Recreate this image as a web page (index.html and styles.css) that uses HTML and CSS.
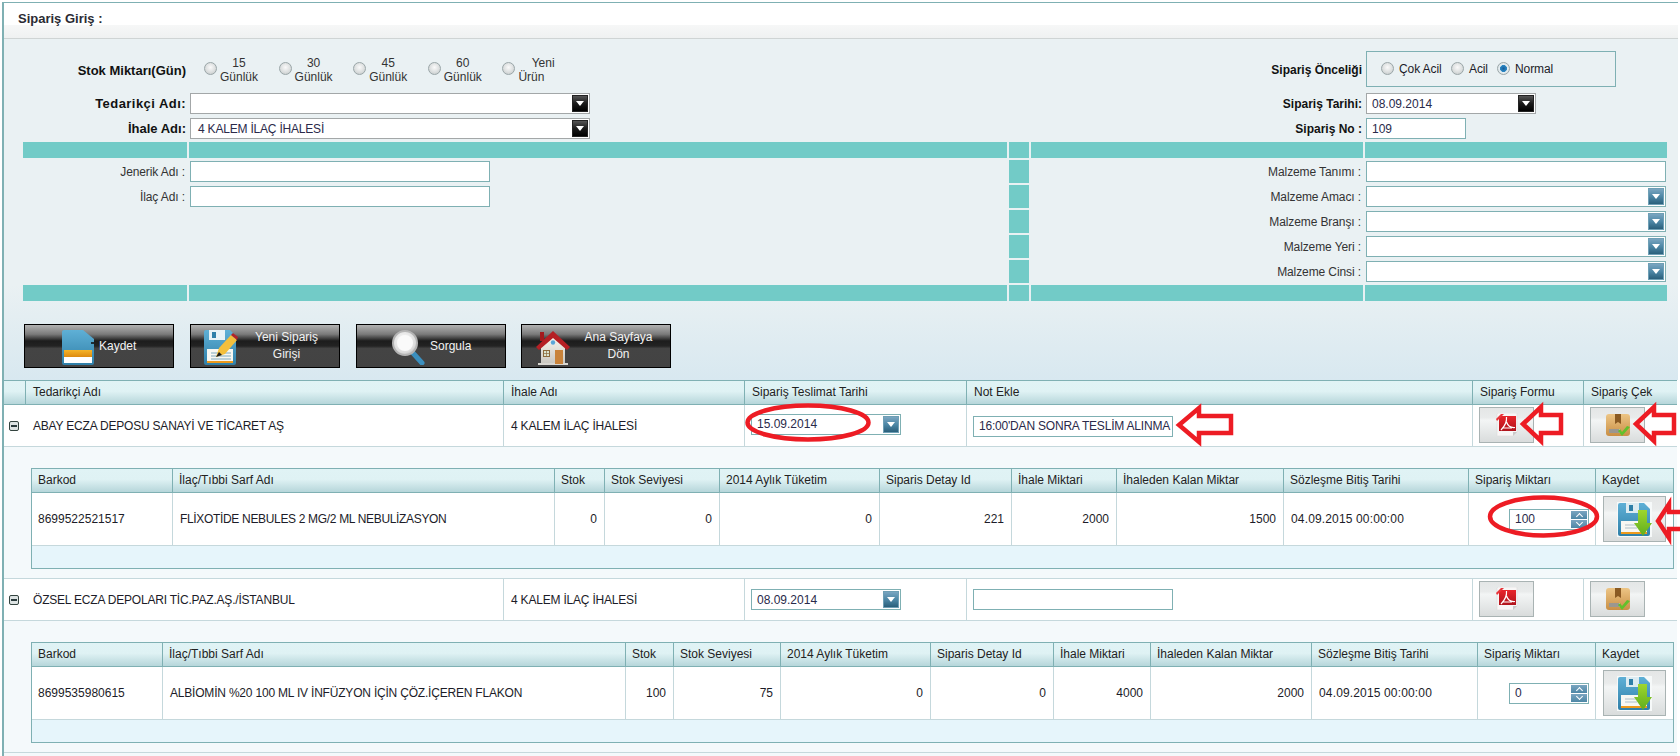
FILE: index.html
```html
<!DOCTYPE html>
<html lang="tr">
<head>
<meta charset="utf-8">
<title>Sipariş Giriş</title>
<link rel="stylesheet" href="styles.css">
</head>
<body>
<svg class="defs" width="0" height="0" aria-hidden="true">
  <defs>
    <linearGradient id="blue" x1="0" y1="0" x2="0" y2="1"><stop offset="0" stop-color="#5fb0d6"/><stop offset="1" stop-color="#2f7fa8"/></linearGradient>
    <linearGradient id="orange" x1="0" y1="0" x2="0" y2="1"><stop offset="0" stop-color="#f5b52a"/><stop offset="1" stop-color="#dd8a10"/></linearGradient>
    <linearGradient id="red" x1="0" y1="0" x2="0" y2="1"><stop offset="0" stop-color="#e8252b"/><stop offset="1" stop-color="#b0141c"/></linearGradient>
    <linearGradient id="tan" x1="0" y1="0" x2="0" y2="1"><stop offset="0" stop-color="#edc585"/><stop offset="1" stop-color="#c98f45"/></linearGradient>
    <linearGradient id="green" x1="0" y1="0" x2="0" y2="1"><stop offset="0" stop-color="#9ed62f"/><stop offset="1" stop-color="#5fae1c"/></linearGradient>
    <linearGradient id="wall" x1="0" y1="0" x2="0" y2="1"><stop offset="0" stop-color="#f8f6f0"/><stop offset="1" stop-color="#c9c7c0"/></linearGradient>
    <radialGradient id="glass" cx=".45" cy=".4" r=".7"><stop offset="0" stop-color="#ffffff"/><stop offset=".7" stop-color="#dcdcdc"/><stop offset="1" stop-color="#a8a8a8"/></radialGradient>
    <symbol id="i-card" viewBox="0 0 32 35">
      <path d="M2 0H21L32 9V33a2 2 0 0 1-2 2H2a2 2 0 0 1-2-2V2a2 2 0 0 1 2-2z" fill="url(#blue)"/>
      <rect x="2" y="20" width="28" height="7" fill="url(#orange)"/>
      <rect x="2" y="27" width="28" height="6" fill="#fff"/>
      <rect x="29" y="12" width="3" height="2" fill="#1c2c36"/>
    </symbol>
    <symbol id="i-new" viewBox="0 0 34 35">
      <path d="M2 0H26L32 6V33a2 2 0 0 1-2 2H2a2 2 0 0 1-2-2V2a2 2 0 0 1 2-2z" fill="url(#blue)"/>
      <rect x="5" y="0" width="16" height="10" fill="#e8f2f6"/>
      <rect x="8" y="2" width="4" height="6" fill="#2f7fa8"/>
      <rect x="3" y="19" width="26" height="14" fill="#f7f7f2"/>
      <rect x="3" y="31" width="26" height="2" fill="#ee9a1c"/>
      <path d="M7 23H27M7 26H27M7 29H27" stroke="#7fa9bd" stroke-width="1"/>
      <path d="M12 27L15 18 27 5 33 10 21 24z" fill="#f3bf3c"/>
      <path d="M27 5L29 3 34 7 33 10z" fill="#b22328"/>
      <path d="M12 27L15 22 18 25 12 27z" fill="#1c1c1c"/>
    </symbol>
    <symbol id="i-search" viewBox="0 0 33 35">
      <path d="M21 23L30 33" stroke="#3b8fbe" stroke-width="5" stroke-linecap="round"/>
      <circle cx="13" cy="13" r="12" fill="url(#glass)" stroke="#b4b4b4" stroke-width="2"/>
      <circle cx="13" cy="13" r="8" fill="#fafafa"/>
    </symbol>
    <symbol id="i-home" viewBox="0 0 34 35">
      <path d="M5 17L17 6 29 17V34H5z" fill="url(#wall)"/>
      <rect x="2" y="33" width="30" height="2" fill="#d8d6d0"/>
      <rect x="4" y="2" width="4" height="9" fill="#a3191d"/>
      <path d="M0 17L17 1 34 17 31 20 17 8 3 20z" fill="#b51f24"/>
      <circle cx="17" cy="12.500" r="2.200" fill="#5aa6d8"/>
      <rect x="7" y="20" width="7" height="7" fill="#8b6a3c"/>
      <path d="M8 21H13V26H8z" fill="#d9e4d0"/>
      <path d="M10.500 21V26M8 23.500H13" stroke="#8b6a3c" stroke-width=".7"/>
      <rect x="19" y="20" width="8" height="14" fill="#c9833a"/>
    </symbol>
    <symbol id="i-pdf" viewBox="0 0 22 24">
      <path d="M2 0H21V19L17 23H1V1z" fill="#f8f6f6" stroke="#dcdcdc" stroke-width=".6"/>
      <path d="M17 23V19H21z" fill="#c9c9c9"/>
      <rect x="3" y="3" width="17" height="15" fill="url(#red)"/>
      <path d="M0 6L5 1 8 1 1 8z" fill="#e8353a"/>
      <path d="M5 17C9 13 11 9 10.500 4M10.500 9C12 13 15 15 19 14.500M6 15H16" fill="none" stroke="#fff" stroke-width="1.200"/>
    </symbol>
    <symbol id="i-box" viewBox="0 0 24 23">
      <rect width="24" height="22" rx="3" fill="url(#tan)"/>
      <path d="M9 0H15V10L12 8 9 10z" fill="#8a5a22"/>
      <rect x="3" y="15" width="11" height="4" fill="#e9e2d4"/>
      <path d="M4 15V19M6 15V19M8 15V19M10 15V19M12 15V19" stroke="#4c4c4c" stroke-width="1"/>
      <path d="M12 17L16 22 24 13 21 12 16 18 14 15z" fill="#62c02c"/>
    </symbol>
    <symbol id="i-save" viewBox="0 0 35 35">
      <rect width="35" height="35" fill="#f6f9f9"/>
      <path d="M3 1H27L33 7V32a2 2 0 0 1-2 2H3a2 2 0 0 1-2-2V3a2 2 0 0 1 2-2z" fill="url(#blue)"/>
      <rect x="9" y="1" width="13" height="10" fill="#dcebf1"/>
      <rect x="12" y="3" width="4" height="6" fill="#2f7fa8"/>
      <rect x="4" y="19" width="26" height="13" fill="#f7f7f2"/>
      <rect x="4" y="30" width="26" height="2" fill="#ee9a1c"/>
      <path d="M8 23H20M8 26H20" stroke="#aebfc8" stroke-width="1"/>
      <path d="M21 8H30V21H35L26 34 17 21H21z" fill="url(#green)"/>
    </symbol>
  </defs>
</svg>

<div class="page">
  <div class="title">Sipariş Giriş :</div>

  <div class="panel">
    <div class="form-top">
      <div class="lbl strong big">Stok Miktarı(Gün)</div>
      <div class="stock">
        <div class="stock-item"><input type="radio" class="radio" name="stok"><span class="stock-text">15<br>Günlük</span></div>
        <div class="stock-item"><input type="radio" class="radio" name="stok"><span class="stock-text">30<br>Günlük</span></div>
        <div class="stock-item"><input type="radio" class="radio" name="stok"><span class="stock-text">45<br>Günlük</span></div>
        <div class="stock-item"><input type="radio" class="radio" name="stok"><span class="stock-text">60<br>Günlük</span></div>
        <div class="stock-item"><input type="radio" class="radio" name="stok"><span class="stock-text left">&nbsp;&nbsp;&nbsp;&nbsp;Yeni<br>Ürün</span></div>
      </div>
      <div class="lbl strong">Sipariş Önceliği</div>
      <div class="priority">
        <input type="radio" class="radio" name="onc"><span class="pr-text one">Çok Acil</span>
        <input type="radio" class="radio" name="onc"><span class="pr-text two">Acil</span>
        <input type="radio" class="radio" name="onc" checked><span class="pr-text">Normal</span>
      </div>

      <div class="lbl strong big spaced">Tedarikçi Adı:</div>
      <div class="field combo gray wide"><span class="val"></span><span class="drop black"></span></div>
      <div class="lbl strong">Sipariş Tarihi:</div>
      <div class="field combo gray date"><span class="val">08.09.2014</span><span class="drop black"></span></div>

      <div class="lbl strong big">İhale Adı:</div>
      <div class="field combo gray wide"><span class="val caps">4 KALEM İLAÇ İHALESİ</span><span class="drop black"></span></div>
      <div class="lbl strong">Sipariş No :</div>
      <div class="field no"><span class="val">109</span></div>
    </div>

    <div class="band">
      <div class="teal"></div><div class="teal"></div><div class="teal"></div><div class="teal"></div><div class="teal"></div>

      <div class="blbl">Jenerik Adı :</div>
      <div class="bctl"><div class="field text"></div></div>
      <div class="teal"></div>
      <div class="blbl">Malzeme Tanımı :</div>
      <div class="bctl"><div class="field full"></div></div>

      <div class="blbl">İlaç Adı :</div>
      <div class="bctl"><div class="field text"></div></div>
      <div class="teal"></div>
      <div class="blbl">Malzeme Amacı :</div>
      <div class="bctl"><div class="field full combo"><span class="val"></span><span class="drop"></span></div></div>

      <div></div><div></div>
      <div class="teal"></div>
      <div class="blbl">Malzeme Branşı :</div>
      <div class="bctl"><div class="field full combo"><span class="val"></span><span class="drop"></span></div></div>

      <div></div><div></div>
      <div class="teal"></div>
      <div class="blbl">Malzeme Yeri :</div>
      <div class="bctl"><div class="field full combo"><span class="val"></span><span class="drop"></span></div></div>

      <div></div><div></div>
      <div class="teal"></div>
      <div class="blbl">Malzeme Cinsi :</div>
      <div class="bctl"><div class="field full combo"><span class="val"></span><span class="drop"></span></div></div>

      <div class="teal short"></div><div class="teal short"></div><div class="teal short"></div><div class="teal short"></div><div class="teal short"></div>
    </div>

    <div class="toolbar">
      <div class="tbtn b-save"><svg class="ticon w32"><use href="#i-card"/></svg><span class="ttext">Kaydet</span></div>
      <div class="tbtn b-new"><svg class="ticon w34"><use href="#i-new"/></svg><span class="ttext grow">Yeni Sipariş<br>Girişi</span></div>
      <div class="tbtn b-search"><svg class="ticon w33"><use href="#i-search"/></svg><span class="ttext">Sorgula</span></div>
      <div class="tbtn b-home"><svg class="ticon w34"><use href="#i-home"/></svg><span class="ttext grow">Ana Sayfaya<br>Dön</span></div>
    </div>
  </div>

  <div class="grid">
    <div class="mrow mhead">
      <div class="hc"></div><div class="hc">Tedarikçi Adı</div><div class="hc">İhale Adı</div><div class="hc">Sipariş Teslimat Tarihi</div><div class="hc">Not Ekle</div><div class="hc">Sipariş Formu</div><div class="hc">Sipariş Çek</div>
    </div>

    <div class="mrow mbody">
      <div class="mc expand"><span class="minus"></span></div>
      <div class="mc caps">ABAY ECZA DEPOSU SANAYİ VE TİCARET AŞ</div>
      <div class="mc caps">4 KALEM İLAÇ İHALESİ</div>
      <div class="mc tight"><div class="field combo mdate up"><span class="val">15.09.2014</span><span class="drop"></span></div></div>
      <div class="mc tight"><div class="field note down"><span class="val caps">16:00'DAN SONRA TESLİM ALINMA</span></div></div>
      <div class="mc tight top"><div class="ibtn"><svg class="i-pdf"><use href="#i-pdf"/></svg></div></div>
      <div class="mc tight top"><div class="ibtn"><svg class="i-box"><use href="#i-box"/></svg></div></div>
    </div>
    <div class="detail">
      <div class="sub">
        <div class="srow cols-a shead">
          <div class="hc">Barkod</div><div class="hc">İlaç/Tıbbi Sarf Adı</div><div class="hc">Stok</div><div class="hc">Stok Seviyesi</div><div class="hc">2014 Aylık Tüketim</div><div class="hc">Siparis Detay Id</div><div class="hc">İhale Miktari</div><div class="hc">İhaleden Kalan Miktar</div><div class="hc">Sözleşme Bitiş Tarihi</div><div class="hc">Sipariş Miktarı</div><div class="hc">Kaydet</div>
        </div>
        <div class="srow cols-a sbody">
          <div class="sc">8699522521517</div><div class="sc drug-a">FLİXOTİDE NEBULES 2 MG/2 ML NEBULİZASYON</div><div class="sc num">0</div><div class="sc num">0</div><div class="sc num">0</div><div class="sc num">221</div><div class="sc num">2000</div><div class="sc num">1500</div><div class="sc stamp">04.09.2015 00:00:00</div>
          <div class="sc qty"><div class="field spin"><span class="val">100</span><span class="arrows"><span class="sp"><i class="chev u"></i></span><span class="sp"><i class="chev"></i></span></span></div></div>
          <div class="sc tight"><div class="sbtn"><svg class="i-save"><use href="#i-save"/></svg></div></div>
        </div>
        <div class="sfoot"></div>
      </div>
    </div>

    <div class="mrow mbody second">
      <div class="mc expand"><span class="minus"></span></div>
      <div class="mc caps">ÖZSEL ECZA DEPOLARI TİC.PAZ.AŞ./İSTANBUL</div>
      <div class="mc caps">4 KALEM İLAÇ İHALESİ</div>
      <div class="mc tight"><div class="field combo mdate"><span class="val">08.09.2014</span><span class="drop"></span></div></div>
      <div class="mc tight"><div class="field note"></div></div>
      <div class="mc tight top"><div class="ibtn"><svg class="i-pdf"><use href="#i-pdf"/></svg></div></div>
      <div class="mc tight top"><div class="ibtn"><svg class="i-box"><use href="#i-box"/></svg></div></div>
    </div>
    <div class="detail">
      <div class="sub">
        <div class="srow cols-b shead">
          <div class="hc">Barkod</div><div class="hc">İlaç/Tıbbi Sarf Adı</div><div class="hc">Stok</div><div class="hc">Stok Seviyesi</div><div class="hc">2014 Aylık Tüketim</div><div class="hc">Siparis Detay Id</div><div class="hc">İhale Miktari</div><div class="hc">İhaleden Kalan Miktar</div><div class="hc">Sözleşme Bitiş Tarihi</div><div class="hc">Sipariş Miktarı</div><div class="hc">Kaydet</div>
        </div>
        <div class="srow cols-b sbody">
          <div class="sc">8699535980615</div><div class="sc caps">ALBİOMİN %20 100 ML IV İNFÜZYON İÇİN ÇÖZ.İÇEREN FLAKON</div><div class="sc num">100</div><div class="sc num">75</div><div class="sc num">0</div><div class="sc num">0</div><div class="sc num">4000</div><div class="sc num">2000</div><div class="sc stamp">04.09.2015 00:00:00</div>
          <div class="sc qty"><div class="field spin"><span class="val">0</span><span class="arrows"><span class="sp"><i class="chev u"></i></span><span class="sp"><i class="chev"></i></span></span></div></div>
          <div class="sc tight"><div class="sbtn"><svg class="i-save"><use href="#i-save"/></svg></div></div>
        </div>
        <div class="sfoot"></div>
      </div>
    </div>
    <div class="gridend"></div>
  </div>
</div>

<svg class="marks" width="1680" height="756" viewBox="0 0 1680 756" aria-hidden="true">
  <ellipse cx="808" cy="422.500" rx="60.500" ry="17"/>
  <ellipse cx="1543.500" cy="516.500" rx="53.500" ry="19"/>
  <path d="M1179 425L1199 408V416H1231V433H1199V442z"/>
  <path d="M1523 424L1541 407V415H1561V433H1541V441z"/>
  <path d="M1636 424L1654 407V415H1674V433H1654V441z"/>
  <path d="M1658 521L1669 504V512H1684V529H1669V538z"/>
</svg>
</body>
</html>
```

FILE: styles.css
```css
* { box-sizing: border-box; }
html, body { margin: 0; padding: 0; }
body {
  width: 1680px;
  height: 756px;
  overflow: hidden;
  background: #fff;
  font-family: "Liberation Sans", Arial, sans-serif;
  font-size: 12px;
  color: #1c1c28;
  position: relative;
}
.defs { position: absolute; }

.page {
  margin: 2px 2px 0 2px;
  height: 754px;
  border-top: 1px solid #7fb0b3;
  border-left: 2px solid #7fb0b3;
}
.title {
  height: 36px;
  padding: 9px 0 0 14px;
  font-size: 13px;
  font-weight: bold;
  line-height: 14px;
  color: #2b2b33;
  background: linear-gradient(#fff 0, #fff 22px, #f6f7f7 22px, #eff1f1 35px);
  border-bottom: 1px solid #cfd4d4;
}
.panel {
  height: 341px;
  padding-top: 12px;
  background: linear-gradient(#eaf1f3 0, #eaf1f3 72%, #d8e8f0 100%);
}
.form-top {
  display: grid;
  grid-template-columns: 182px 1fr 170px 300px;
  grid-template-rows: 38px 21px 21px;
  row-gap: 4px;
  column-gap: 4px;
  padding-right: 12px;
}
.lbl { text-align: right; align-self: center; white-space: nowrap; }
.strong { font-weight: bold; color: #111; }
.big { font-size: 13px; }
.spaced { letter-spacing: .45px; }
.caps { letter-spacing: -.2px; }
.drug-a { letter-spacing: -.33px; }
.stamp { letter-spacing: .15px; }

.stock { display: flex; padding-left: 14px; align-items: flex-start; padding-top: 5px; }
.stock-item { width: 74.6px; display: flex; align-items: flex-start; }
.stock-text { margin-left: 3px; text-align: center; line-height: 14px; color: #333; width: 38px; }
.stock-text.left { text-align: left; width: 34px; }
.radio {
  appearance: none;
  -webkit-appearance: none;
  width: 13px;
  height: 13px;
  margin: 6px 0 0;
  flex: none;
  border-radius: 50%;
  border: 1px solid #9aa6a8;
  background: radial-gradient(circle at 50% 40%, #fafafa 0, #dcdfdf 55%, #bfc4c4 100%);
}
.radio:checked {
  background: radial-gradient(circle, #175f9c 0, #2d88c4 42%, #e6eef2 48%, #d5dcdc 100%);
}

.priority {
  display: flex;
  align-items: center;
  width: 250px;
  height: 36px;
  padding-left: 14px;
  border: 1px solid #7fb0b3;
}
.priority .radio { margin: -2px 0 0; }
.pr-text { margin-left: 5px; letter-spacing: -.1px; }
.pr-text.one { width: 52px; }
.pr-text.two { width: 28px; }

.field {
  height: 21px;
  background: #fff;
  border: 1px solid #7fb0b3;
  display: flex;
  align-items: center;
}
.val { flex: 1; padding-left: 5px; white-space: nowrap; overflow: hidden; color: #2a2a4a; }
.wide .val { padding-left: 7px; }
.gray { border-color: #a3a7a8; }
.wide { width: 400px; }
.date { width: 170px; }
.no { width: 100px; }
.text { width: 300px; }
.full { width: 300px; }
.drop {
  flex: none;
  width: 16px;
  height: 17px;
  margin-right: 1px;
  background: linear-gradient(#7aa5c0 0, #4d87a6 50%, #2a5f7b 100%);
  border: 1px solid #6e9fb5;
  position: relative;
}
.drop::after {
  content: "";
  position: absolute;
  left: 3px;
  top: 5px;
  border-left: 4px solid transparent;
  border-right: 4px solid transparent;
  border-top: 5px solid #fff;
}
.drop.black { background: linear-gradient(#555 0, #1a1a1a 50%, #000 100%); border-color: #222; }

.band {
  display: grid;
  grid-template-columns: 164px 818px 20px 332px 302px;
  grid-template-rows: 16px repeat(5, 23px) 16px;
  gap: 2px;
  margin: 3px 0 0 19px;
}
.teal { background: #72cbc7; }
.blbl { text-align: right; padding-right: 2px; align-self: center; white-space: nowrap; color: #333; letter-spacing: -.1px; }
.bctl { display: flex; align-items: center; padding-left: 1px; }

.toolbar { display: flex; gap: 16px; margin: 23px 0 0 20px; }
.tbtn {
  width: 150px;
  height: 44px;
  border: 1px solid #000;
  display: flex;
  align-items: center;
  color: #f2f2f2;
  text-align: center;
  line-height: 17px;
  background: linear-gradient(#b2b2b2 0, #7a7a7a 22%, #1c1c1c 38%, #232323 50%, #444 56%, #434343 100%);
}
.b-save { padding-left: 37px; }
.b-new { padding: 0 9px 0 13px; }
.b-search { padding-left: 35px; }
.b-home { padding: 0 8px 0 14px; margin-left: -1px; }
.ticon { height: 35px; flex: none; margin-top: 3px; }
.w32 { width: 32px; }
.w33 { width: 33px; }
.w34 { width: 34px; }
.ttext { margin-left: 5px; white-space: nowrap; }
.ttext.grow { flex: 1; }

.grid { width: 1673px; }
.mrow { display: grid; grid-template-columns: 22px 478px 241px 222px 506px 111px 93px; }
.mhead {
  height: 25px;
  border-top: 1px solid #7fb0b3;
  border-bottom: 1px solid #7fb0b3;
  background: linear-gradient(#e0f3f5 0, #dff2f4 45%, #b6d6da 100%);
}
.hc {
  padding-left: 7px;
  line-height: 23px;
  white-space: nowrap;
  overflow: hidden;
  border-right: 1px solid #7fb0b3;
  color: #222;
}
.hc:last-child { border-right: 0; }
.shead .hc { padding-left: 6px; }
.mbody { height: 42px; background: #fff; border-bottom: 1px solid #c5d8dc; }
.second { height: 43px; border-top: 1px solid #c5d8dc; }
.mc {
  padding-left: 7px;
  display: flex;
  align-items: center;
  border-right: 1px solid #c5d8dc;
  white-space: nowrap;
}
.mc:last-child { border-right: 0; }
.tight { padding-left: 6px; }
.top { align-items: flex-start; padding-top: 2px; }
.expand { padding-left: 5px; border-right: 0; }
.minus {
  width: 10px;
  height: 10px;
  border: 1px solid #33433f;
  border-radius: 2px;
  background: linear-gradient(90deg, #2a3a3c, #2a3a3c) center / 6px 2px no-repeat, #dde3e3;
}
.mdate { width: 150px; }
.note { width: 200px; }
.up { margin-top: -3px; }
.down { margin-top: 1px; }
.ibtn, .sbtn {
  border: 1px solid #a9b3b3;
  display: flex;
  align-items: center;
  justify-content: center;
  background: linear-gradient(#e4e6e6 0, #e9ebeb 28%, #f3f5f5 36%, #d9dcdc 100%);
}
.ibtn { width: 55px; height: 36px; }
.sbtn { width: 65px; height: 46px; }
.i-pdf { width: 22px; height: 24px; }
.i-box { width: 24px; height: 23px; }
.i-save { width: 35px; height: 35px; }

.detail { padding: 21px 3px 9px 27px; background: #f4f9fb; }
.sub { border: 1px solid #7fb0b3; }
.srow { display: grid; }
.cols-a { grid-template-columns: 141px 382px 50px 115px 160px 132px 105px 167px 185px 127px 77px; }
.cols-b { grid-template-columns: 131px 463px 48px 107px 150px 123px 97px 161px 166px 118px 77px; }
.shead {
  height: 24px;
  border-bottom: 1px solid #7fb0b3;
  background: linear-gradient(#e0f3f5 0, #dff2f4 45%, #b6d6da 100%);
}
.sbody { height: 53px; background: #fff; border-bottom: 1px solid #c5d8dc; }
.sc {
  padding: 0 7px;
  display: flex;
  align-items: center;
  border-right: 1px solid #c5d8dc;
  white-space: nowrap;
}
.sc:first-child { padding-left: 6px; }
.sc:last-child { border-right: 0; }
.num { justify-content: flex-end; }
.qty { justify-content: flex-end; padding-right: 6px; }
.spin { width: 80px; }
.arrows { display: flex; flex-direction: column; gap: 1px; margin-right: 1px; }
.sp {
  width: 16px;
  height: 8px;
  background: linear-gradient(#7aa5c0, #4d87a6);
  display: flex;
  align-items: center;
  justify-content: center;
}
.chev {
  width: 5px;
  height: 5px;
  margin-top: -3px;
  border-right: 1px solid #fff;
  border-bottom: 1px solid #fff;
  transform: rotate(45deg);
}
.chev.u { margin-top: 3px; transform: rotate(225deg); }
.sfoot { height: 22px; background: #e6f5fb; }
.gridend { height: 4px; background: #f4f9fb; border-top: 1px solid #c5d8dc; }

.marks { position: absolute; left: 0; top: 0; pointer-events: none; }
.marks ellipse, .marks path { fill: none; stroke: #ed1c24; stroke-width: 4.5; }
```
